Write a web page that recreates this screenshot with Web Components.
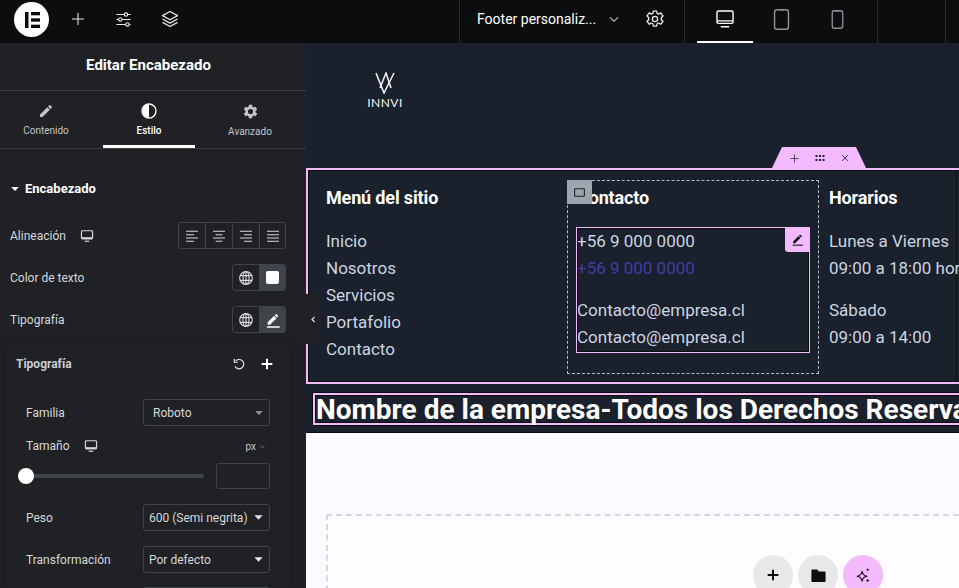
<!DOCTYPE html>
<html lang="es">
<head>
<meta charset="utf-8">
<title>Editar Encabezado</title>
<style>
    html, body { margin: 0; height: 100%; overflow: hidden; background: #1a202c; font-family: Roboto, sans-serif; }
</style>
</head>
<body>
<ed-app></ed-app>
<script>
const ICONS = {
    plus: '<path d="M12 3v18M3 12h18" fill="none" stroke="currentColor" stroke-width="1.6"/>',
    plusBold: '<path d="M12 4v16M4 12h16" fill="none" stroke="currentColor" stroke-width="3"/>',
    sliders: '<g fill="none" stroke="currentColor" stroke-width="1.6"><path d="M2 5h11M18 5h4M2 12h3M10 12h12M2 19h13M20 19h2"/><circle cx="15.5" cy="5" r="2.4"/><circle cx="7.5" cy="12" r="2.4"/><circle cx="17.5" cy="19" r="2.4"/></g>',
    layers: '<g fill="none" stroke="currentColor" stroke-width="1.6" stroke-linejoin="round"><path d="M12 2l10 5.5L12 13 2 7.5z"/><path d="M2 12l10 5.5L22 12"/><path d="M2 16.5L12 22l10-5.5"/></g>',
    pencil: '<path fill="currentColor" d="M3 17.25V21h3.75L17.81 9.94l-3.75-3.75L3 17.25zM20.71 7.04a1 1 0 0 0 0-1.41l-2.34-2.34a1 1 0 0 0-1.41 0l-1.83 1.83 3.75 3.75z"/>',
    pencilLine: '<path fill="currentColor" d="M4 15.5V19h3.5L17.3 9.2l-3.5-3.5zM19.6 6.9a1 1 0 0 0 0-1.4l-2.1-2.1a1 1 0 0 0-1.4 0l-1.3 1.3 3.5 3.5z"/><path d="M3 22.5h19" stroke="currentColor" stroke-width="2"/>',
    contrast: '<circle cx="12" cy="12" r="10.5" fill="none" stroke="currentColor" stroke-width="2"/><path d="M12 2a10 10 0 0 0 0 20z" fill="currentColor"/>',
    gear: '<path fill="currentColor" d="M19.14 12.94c.04-.3.06-.61.06-.94 0-.32-.02-.64-.07-.94l2.03-1.58a.49.49 0 0 0 .12-.61l-1.92-3.32a.49.49 0 0 0-.59-.22l-2.39.96c-.5-.38-1.03-.7-1.62-.94l-.36-2.54a.48.48 0 0 0-.48-.41h-3.84a.48.48 0 0 0-.47.41l-.36 2.54c-.59.24-1.13.57-1.62.94l-2.39-.96a.48.48 0 0 0-.59.22L2.74 8.87a.48.48 0 0 0 .12.61l2.03 1.58c-.05.3-.09.63-.09.94s.02.64.07.94l-2.03 1.58a.49.49 0 0 0-.12.61l1.92 3.32c.12.22.37.29.59.22l2.39-.96c.5.38 1.03.7 1.62.94l.36 2.54c.05.24.24.41.48.41h3.84c.24 0 .44-.17.47-.41l.36-2.54c.59-.24 1.13-.56 1.62-.94l2.39.96c.22.08.47 0 .59-.22l1.92-3.32a.48.48 0 0 0-.12-.61l-2.01-1.58zM12 15.6A3.6 3.6 0 1 1 12 8.4a3.6 3.6 0 0 1 0 7.2z"/>',
    gearLine: '<g fill="none" stroke="currentColor" stroke-width="1.6" stroke-linejoin="round"><path d="M10 2.5h4l.5 2.8 1.9.9 2.4-1.5 2.8 3.6-2 1.9v2.6l2 1.9-2.8 3.6-2.4-1.5-1.9.9-.5 2.8h-4l-.5-2.8-1.9-.9-2.4 1.5-2.8-3.6 2-1.9v-2.6l-2-1.9 2.8-3.6 2.4 1.5 1.9-.9z"/><circle cx="12" cy="12" r="3.2"/></g>',
    chevron: '<path d="M5 9l7 7 7-7" fill="none" stroke="currentColor" stroke-width="1.8"/>',
    chevronLeft: '<path d="M15 5l-7 7 7 7" fill="none" stroke="currentColor" stroke-width="3"/>',
    caret: '<path d="M3 7h18l-9 10z" fill="currentColor"/>',
    monitor: '<g fill="none" stroke="currentColor"><rect x="2.5" y="3" width="19" height="14" rx="1.5" stroke-width="2"/><path d="M8 21h8" stroke-width="2"/></g><rect x="3" y="14" width="18" height="3" fill="currentColor"/>',
    desktop: '<g fill="none" stroke="currentColor" stroke-width="1.5"><rect x="3.25" y="3.25" width="17.5" height="13.5" rx="1.5"/><path d="M3.500 14h17M7.500 20.500h9"/></g>',
    tablet: '<g fill="none" stroke="currentColor" stroke-width="1.5"><rect x="4.75" y="1.75" width="14.5" height="20.5" rx="2.5"/><path d="M10 2h4"/></g>',
    phone: '<g fill="none" stroke="currentColor" stroke-width="1.5"><rect x="6" y="2" width="12" height="20" rx="2.5"/><path d="M10.5 2.5h3"/></g>',
    globe: '<g fill="none" stroke="currentColor" stroke-width="1.7"><circle cx="12" cy="12" r="9.5"/><ellipse cx="12" cy="12" rx="4.5" ry="9.5"/><path d="M3 8.5h18M3 15.5h18M12 2.500v19"/></g>',
    alignLeft: '<path d="M3 5h18M3 10h12M3 15h18M3 20h12" fill="none" stroke="currentColor" stroke-width="1.6"/>',
    alignCenter: '<path d="M3 5h18M7 10h10M3 15h18M7 20h10" fill="none" stroke="currentColor" stroke-width="1.6"/>',
    alignRight: '<path d="M3 5h18M9 10h12M3 15h18M9 20h12" fill="none" stroke="currentColor" stroke-width="1.6"/>',
    alignJustify: '<path d="M3 5h18M3 10h18M3 15h18M3 20h18" fill="none" stroke="currentColor" stroke-width="1.6"/>',
    reset: '<path d="M6.500 6.500A8 8 0 1 1 5 16" fill="none" stroke="currentColor" stroke-width="2"/><path d="M4 3v6h6" fill="none" stroke="currentColor" stroke-width="2"/>',
    dots: '<g fill="currentColor"><rect x="3" y="6" width="4" height="4"/><rect x="10" y="6" width="4" height="4"/><rect x="17" y="6" width="4" height="4"/><rect x="3" y="14" width="4" height="4"/><rect x="10" y="14" width="4" height="4"/><rect x="17" y="14" width="4" height="4"/></g>',
    close: '<path d="M5 5l14 14M19 5L5 19" fill="none" stroke="currentColor" stroke-width="2"/>',
    square: '<rect x="3" y="5" width="18" height="14" rx="1" fill="none" stroke="currentColor" stroke-width="2"/>',
    folder: '<path fill="currentColor" d="M3 3.500h7l2.500 3H21a1 1 0 0 1 1 1V20a1 1 0 0 1-1 1H3a1 1 0 0 1-1-1V4.500a1 1 0 0 1 1-1z"/>',
    sparkles: '<path d="M10 6c.7 4.300 2.700 6.300 7 7-4.300.7-6.300 2.700-7 7-.7-4.300-2.700-6.300-7-7 4.300-.7 6.300-2.700 7-7z" fill="none" stroke="currentColor" stroke-width="1.6" stroke-linejoin="round"/><path d="M18 1c.3 2 1 2.700 3 3-2 .3-2.700 1-3 3-.3-2-1-2.700-3-3 2-.3 2.700-1 3-3zM18 16c.3 2 1 2.700 3 3-2 .3-2.700 1-3 3-.3-2-1-2.700-3-3 2-.3 2.700-1 3-3z" fill="currentColor"/>',
    elementor: '<g fill="currentColor"><rect x="5" y="4" width="3.500" height="16"/><rect x="11" y="4" width="9" height="3.300"/><rect x="11" y="10.350" width="9" height="3.300"/><rect x="11" y="16.700" width="9" height="3.300"/></g>'
};

// base class: every element fills its open shadow root from its html() string
class EdElement extends HTMLElement {
    constructor() {
        super();
        this.attachShadow({ mode: 'open' });
    }
    connectedCallback() {
        this.shadowRoot.innerHTML = this.html();
    }
    html() {
        return '<slot></slot>';
    }
}

class EdIcon extends HTMLElement {
    constructor() {
        super();
        this.attachShadow({ mode: 'open' });
    }
    connectedCallback() {
        const size = this.getAttribute('size') || 16;
        const name = this.getAttribute('name');
        this.shadowRoot.innerHTML = `
            <style>
                :host { display: inline-flex; width: ${size}px; height: ${size}px; flex: none; }
                svg { width: 100%; height: 100%; display: block; }
            </style>
            <svg viewBox="0 0 24 24" aria-hidden="true">${ICONS[name] || ''}</svg>`;
    }
}

class EdTopbar extends EdElement {
    html() {
        return `
            <style>
                :host { display: flex; height: 43px; background: #0c0d0e; color: #e6e8ea; flex: none; align-items: stretch; }
                .logo { width: 35px; height: 35px; border-radius: 50%; background: #fff; color: #0c0d0e; margin: 2px 0 0 14px; display: flex; align-items: center; justify-content: center; }
                .tools { display: flex; align-items: center; margin-left: 21px; gap: 29px; padding-bottom: 5px; }
                .doc { margin-left: auto; display: flex; align-items: center; height: 100%; width: 225px; border-left: 1px solid #2b2c2f; box-sizing: border-box; padding: 0 0 5px 17px; color: #fff; font-size: 14px; white-space: nowrap; }
                .doc .chev { margin-left: 11px; color: #d5d8dc; }
                .doc .set { margin-left: 24px; color: #e6e8ea; }
                .modes { width: 193px; display: flex; border-left: 1px solid #2b2c2f; box-sizing: border-box; padding-left: 12px; color: #8e9297; }
                .mode { height: 43px; width: 56px; display: flex; align-items: center; justify-content: center; box-sizing: border-box; padding-bottom: 5px; }
                .mode.on { color: #fff; border-bottom: 2px solid #fff; padding-bottom: 3px; }
                .tail { width: 68px; border-left: 1px solid #2b2c2f; box-sizing: border-box; }
                .end { width: 14px; border-left: 1px solid #2b2c2f; box-sizing: border-box; }
            </style>
            <div class="logo"><ed-icon name="elementor" size="24"></ed-icon></div>
            <div class="tools">
                <ed-icon name="plus" size="16"></ed-icon>
                <ed-icon name="sliders" size="17"></ed-icon>
                <ed-icon name="layers" size="18"></ed-icon>
            </div>
            <div class="doc"><span>Footer personaliz...</span>
                <ed-icon class="chev" name="chevron" size="14"></ed-icon>
                <ed-icon class="set" name="gearLine" size="20"></ed-icon>
            </div>
            <div class="modes">
                <div class="mode on"><ed-icon name="desktop" size="22"></ed-icon></div>
                <div class="mode"><ed-icon name="tablet" size="23"></ed-icon></div>
                <div class="mode"><ed-icon name="phone" size="21"></ed-icon></div>
            </div>
            <div class="tail"></div>
            <div class="end"></div>`;
    }
}

class EdTabs extends EdElement {
    html() {
        return `
            <style>
                :host { display: grid; grid-template-columns: 92px 92px 88px; column-gap: 11px; height: 57px; border-bottom: 1px solid #3a3c3f; flex: none; }
                .tab { display: flex; flex-direction: column; align-items: center; padding-top: 12px; box-sizing: border-box; gap: 6px; font-size: 10px; color: #c2c5c9; line-height: 12px; }
                .tab.on { color: #fff; border-bottom: 3px solid #fff; font-weight: 500; height: 57px; }
            </style>
            <div class="tab"><ed-icon name="pencil" size="16"></ed-icon>Contenido</div>
            <div class="tab on"><ed-icon name="contrast" size="16"></ed-icon>Estilo</div>
            <div class="tab"><ed-icon name="gear" size="17"></ed-icon>Avanzado</div>`;
    }
}

class EdRow extends EdElement {
    html() {
        const responsive = this.hasAttribute('responsive') ? '<ed-icon name="monitor" size="14"></ed-icon>' : '';
        return `
            <style>
                :host { display: flex; align-items: center; justify-content: space-between; height: 27px; font-size: 12px; color: #d5d8dc; }
                .label { display: flex; align-items: center; gap: 14px; }
            </style>
            <div class="label"><slot></slot>${responsive}</div>
            <slot name="control"></slot>`;
    }
}

class EdChoices extends EdElement {
    html() {
        return `
            <style>
                :host { display: inline-flex; height: 27px; box-sizing: border-box; border: 1px solid #3f444b; border-radius: 3px; color: #d5d8dc; overflow: hidden; }
                ::slotted(*) { width: 26px; display: flex; align-items: center; justify-content: center; }
                ::slotted(*:not(:last-child)) { border-right: 1px solid #3f444b; }
                ::slotted(*:last-child) { width: 25px; }
                ::slotted(.on) { background: #3f444b; color: #fff; }
            </style>
            <slot></slot>`;
    }
}

class EdSelect extends EdElement {
    html() {
        const pad = this.getAttribute('pad') || 5;
        const muted = this.hasAttribute('muted');
        return `
            <style>
                :host { display: flex; align-items: center; justify-content: space-between; width: 127px; height: 27px; box-sizing: border-box; border: 1px solid #3f444b; border-radius: 3px; font-size: 12px; color: #d5d8dc; padding: 0 5px 0 ${pad}px; white-space: nowrap; }
                .caret { color: ${muted ? '#8e9297' : '#e6e8ea'}; }
            </style>
            <span><slot></slot></span><ed-icon class="caret" name="caret" size="${muted ? 10 : 11}"></ed-icon>`;
    }
}

class EdTypography extends EdElement {
    html() {
        return `
            <style>
                :host { position: absolute; left: 6px; top: 302px; width: 284px; height: 243px; background: #1f2124; border-radius: 3px 3px 0 0; box-shadow: 0 2px 15px rgba(0,0,0,.3); color: #d5d8dc; font-size: 12px; display: block; }
                .arrow { position: absolute; left: 250px; top: -6px; width: 12px; height: 12px; background: #1f2124; transform: rotate(45deg); }
                .head { position: relative; display: flex; align-items: center; justify-content: space-between; height: 38px; padding: 0 15px 0 10px; font-weight: 700; font-size: 12px; color: #c9ccd0; }
                .acts { display: flex; gap: 13px; color: #e6e8ea; align-items: center; }
                .acts .p { color: #fff; }
                .body { display: flex; flex-direction: column; padding: 16px 20px 0; height: 205px; box-sizing: border-box; overflow: hidden; }
                .body > * { flex: none; }
                .size { display: flex; align-items: center; justify-content: space-between; height: 20px; margin-top: 3px; padding-top: 7px; }
                .size .l { display: flex; gap: 14px; align-items: center; }
                .unit { font-size: 10px; color: #c2c5c9; display: flex; gap: 3px; align-items: center; padding-right: 4px; }
                .slider { display: flex; align-items: center; justify-content: space-between; margin-top: 7px; height: 26px; }
                .track { position: relative; width: 178px; height: 4px; background: #3f444b; border-radius: 2px; }
                .thumb { position: absolute; left: -8px; top: -6px; width: 16px; height: 16px; border-radius: 50%; background: #fff; }
                .num { width: 54px; height: 26px; box-sizing: border-box; border: 1px solid #3f444b; border-radius: 3px; }
                ed-row.gap { margin-top: 15px; }
                .next { height: 27px; width: 127px; align-self: flex-end; margin-top: 14px; box-sizing: border-box; border: 1px solid #3f444b; border-radius: 3px; }
            </style>
            <div class="arrow"></div>
            <div class="head">Tipografía
                <div class="acts"><ed-icon name="reset" size="14"></ed-icon><ed-icon class="p" name="plusBold" size="16"></ed-icon></div>
            </div>
            <div class="body">
                <ed-row>Familia<ed-select slot="control" pad="9" muted>Roboto</ed-select></ed-row>
                <div class="size"><div class="l">Tamaño <ed-icon name="monitor" size="14"></ed-icon></div><div class="unit">px <ed-icon name="chevron" size="7"></ed-icon></div></div>
                <div class="slider"><div class="track"><div class="thumb"></div></div><div class="num"></div></div>
                <ed-row class="gap">Peso<ed-select slot="control">600 (Semi negrita)</ed-select></ed-row>
                <ed-row class="gap">Transformación<ed-select slot="control">Por defecto</ed-select></ed-row>
                <div class="next"></div>
            </div>`;
    }
}

class EdPanel extends EdElement {
    html() {
        return `
            <style>
                :host { display: flex; flex-direction: column; width: 306px; flex: none; background: #1f2124; color: #fff; position: relative; z-index: 2; }
                .title { height: 48px; flex: none; box-sizing: border-box; padding: 0 9px 3px 0; display: flex; align-items: center; justify-content: center; font-size: 15px; font-weight: 700; border-bottom: 1px solid #3a3c3f; }
                .section { display: flex; align-items: center; gap: 5px; padding: 30px 10px 0; font-size: 13px; font-weight: 700; height: 19px; color: #fff; }
                .controls { display: flex; flex-direction: column; gap: 15px; padding: 24px 20px 0 10px; }
                .collapse { position: absolute; left: 306px; top: 251px; width: 15px; height: 50px; background: #1f2124; color: #e6e8ea; display: flex; align-items: center; justify-content: center; }
                .swatch { display: block; width: 13px; height: 13px; background: #fff; border-radius: 2px; }
            </style>
            <div class="title">Editar Encabezado</div>
            <ed-tabs></ed-tabs>
            <div class="section"><ed-icon name="caret" size="10"></ed-icon>Encabezado</div>
            <div class="controls">
                <ed-row responsive>Alineación
                    <ed-choices slot="control">
                        <div><ed-icon name="alignLeft" size="16"></ed-icon></div>
                        <div><ed-icon name="alignCenter" size="16"></ed-icon></div>
                        <div><ed-icon name="alignRight" size="16"></ed-icon></div>
                        <div><ed-icon name="alignJustify" size="16"></ed-icon></div>
                    </ed-choices>
                </ed-row>
                <ed-row>Color de texto
                    <ed-choices slot="control">
                        <div><ed-icon name="globe" size="16"></ed-icon></div>
                        <div class="on"><span class="swatch"></span></div>
                    </ed-choices>
                </ed-row>
                <ed-row>Tipografía
                    <ed-choices slot="control">
                        <div><ed-icon name="globe" size="16"></ed-icon></div>
                        <div class="on"><ed-icon name="pencilLine" size="16"></ed-icon></div>
                    </ed-choices>
                </ed-row>
            </div>
            <div class="collapse"><ed-icon name="chevronLeft" size="9"></ed-icon></div>
            <ed-typography></ed-typography>`;
    }
}

class EdLogo extends EdElement {
    html() {
        return `
            <style>
                :host { display: flex; flex-direction: column; align-items: center; width: 36px; color: #f4f5f7; }
                svg { width: 20px; height: 22px; display: block; }
                span { font-family: Lato, sans-serif; font-weight: 400; font-size: 12px; line-height: 13px; letter-spacing: .5px; margin-top: 2px; white-space: nowrap; }
            </style>
            <svg viewBox="0 0 20 22" fill="none" stroke="currentColor" stroke-width="1.500">
                <path d="M1 1l8 20L19 1"/><path d="M5 16L11 1l5 15"/>
            </svg>
            <span>INNVI</span>`;
    }
}

class EdHandle extends EdElement {
    html() {
        return `
            <style>
                :host { position: absolute; left: 464px; top: -23px; width: 94px; height: 21px; background: #f3bafd; color: #1a202c; clip-path: polygon(10px 0, 84px 0, 94px 100%, 0 100%); display: flex; align-items: center; justify-content: center; gap: 14px; padding-top: 1px; box-sizing: border-box; }
            </style>
            <ed-icon name="plus" size="11"></ed-icon>
            <ed-icon name="dots" size="12"></ed-icon>
            <ed-icon name="close" size="10"></ed-icon>`;
    }
}

class EdColumn extends EdElement {
    html() {
        return `
            <style>
                :host { display: block; width: 252px; flex: none; box-sizing: border-box; padding: 1px 10px 10px; position: relative; }
                :host([selected]) { outline: 1px dashed #b7bcc4; outline-offset: -1px; }
                h3 { margin: 0; font-size: 18px; line-height: 34px; font-weight: 700; color: #fff; white-space: nowrap; letter-spacing: -.15px; }
                .body { margin-top: 12px; }
            </style>
            <h3>${this.getAttribute('heading')}</h3>
            <div class="body"><slot></slot></div>`;
    }
}

class EdTextList extends EdElement {
    html() {
        return `
            <style>
                :host { display: block; font-size: 17px; line-height: 27px; color: #cbd5e0; white-space: nowrap; padding: 1px 0 2px; }
                :host([active]) { position: relative; margin: 0 -1px; }
                :host([active]) .wrap { padding-left: 1px; }
                .frame, .pen { display: none; }
                :host([active]) .frame { display: block; position: absolute; inset: 0; border: 1px solid #f3bafd; outline: 1px solid #0c0d0e; outline-offset: -2px; pointer-events: none; }
                :host([active]) .pen { display: flex; }
                .pen { position: absolute; right: 0; top: 0; width: 25px; height: 25px; background: #f3bafd; color: #12141a; align-items: center; justify-content: center; border-radius: 0 0 0 3px; }
            </style>
            <div class="wrap"><slot></slot></div>
            <div class="frame"></div>
            <div class="pen"><ed-icon name="pencilLine" size="13"></ed-icon></div>`;
    }
}

class EdFooter extends EdElement {
    html() {
        return `
            <style>
                :host { display: flex; height: 216px; flex: none; box-sizing: border-box; position: relative; background: #1a202c; border: 2px solid #f3bafd; border-right: 0; outline: 1px solid #0c0d0e; outline-offset: -3px; padding: 10px 0 0 8px; }
                .spacer { display: block; height: 15px; }
                .blue { color: #3f3fa8; }
                .badge { position: absolute; left: 0; top: 0; width: 25px; height: 24px; background: #9da5ae; color: #1a202c; display: flex; align-items: center; justify-content: center; }
                .first { width: 251px; }
                .selected { height: 194px; }
            </style>
            <ed-handle></ed-handle>
            <ed-column class="first" heading="Menú del sitio">
                <ed-text-list>Inicio<br>Nosotros<br>Servicios<br>Portafolio<br>Contacto</ed-text-list>
            </ed-column>
            <ed-column class="selected" heading="Contacto" selected>
                <ed-text-list active>+56 9 000 0000<br><span class="blue">+56 9 000 0000</span><br><span class="spacer"></span>Contacto@empresa.cl<br>Contacto@empresa.cl</ed-text-list>
                <div class="badge"><ed-icon name="square" size="13"></ed-icon></div>
            </ed-column>
            <ed-column heading="Horarios">
                <ed-text-list>Lunes a Viernes<br>09:00 a 18:00 horas<br><span class="spacer"></span>Sábado<br>09:00 a 14:00</ed-text-list>
            </ed-column>`;
    }
}

class EdCopyright extends EdElement {
    html() {
        return `
            <style>
                :host { display: block; height: 49px; flex: none; background: #1a202c; box-sizing: border-box; padding: 9px 0 0 7px; border-bottom: 1px solid #0c0d0e; }
                h2 { margin: 0; box-sizing: border-box; width: max-content; height: 32px; line-height: 30px; font-size: 28px; font-weight: 700; color: #fff; white-space: nowrap; border: 2px solid #f3bafd; box-shadow: inset 0 0 0 1px #0c0d0e, 0 0 0 1px #0c0d0e; padding-left: 1px; }
            </style>
            <h2>Nombre de la empresa-Todos los Derechos Reservados</h2>`;
    }
}

class EdDropzone extends EdElement {
    html() {
        return `
            <style>
                :host { display: block; flex: 1; background: #f9fbfe; padding: 81px 0 0 20px; position: relative; }
                .zone { border: 2px dashed #d5d8dc; border-right: 0; height: 200px; background: #fdfdff; display: flex; padding-top: 39px; padding-left: 425px; box-sizing: border-box; gap: 5px; }
                .btn { width: 40px; height: 40px; border-radius: 50%; background: #e6e8ea; color: #0c0d0e; display: flex; align-items: center; justify-content: center; flex: none; }
                .btn.ai { background: #f3bafd; }
            </style>
            <div class="zone">
                <div class="btn"><ed-icon name="plusBold" size="16"></ed-icon></div>
                <div class="btn"><ed-icon name="folder" size="17"></ed-icon></div>
                <div class="btn ai"><ed-icon name="sparkles" size="17"></ed-icon></div>
            </div>`;
    }
}

class EdCanvas extends EdElement {
    html() {
        return `
            <style>
                :host { display: flex; flex-direction: column; flex: 1; min-width: 0; background: #1a202c; overflow: hidden; }
                header { height: 125px; flex: none; padding: 29px 0 0 61px; box-sizing: border-box; }
            </style>
            <header><ed-logo></ed-logo></header>
            <ed-footer></ed-footer>
            <ed-copyright></ed-copyright>
            <ed-dropzone></ed-dropzone>`;
    }
}

class EdApp extends EdElement {
    html() {
        return `
            <style>
                :host { display: flex; flex-direction: column; height: 588px; width: 959px; overflow: hidden; font-family: Roboto, sans-serif; }
                .main { display: flex; flex: 1; min-height: 0; }
            </style>
            <ed-topbar></ed-topbar>
            <div class="main"><ed-panel></ed-panel><ed-canvas></ed-canvas></div>`;
    }
}

const elements = {
    'ed-icon': EdIcon, 'ed-topbar': EdTopbar, 'ed-tabs': EdTabs, 'ed-row': EdRow, 'ed-choices': EdChoices,
    'ed-select': EdSelect, 'ed-typography': EdTypography, 'ed-panel': EdPanel, 'ed-logo': EdLogo,
    'ed-handle': EdHandle, 'ed-column': EdColumn, 'ed-text-list': EdTextList, 'ed-footer': EdFooter,
    'ed-copyright': EdCopyright, 'ed-dropzone': EdDropzone, 'ed-canvas': EdCanvas, 'ed-app': EdApp
};
Object.keys(elements).forEach((name) => customElements.define(name, elements[name]));
</script>
</body>
</html>
